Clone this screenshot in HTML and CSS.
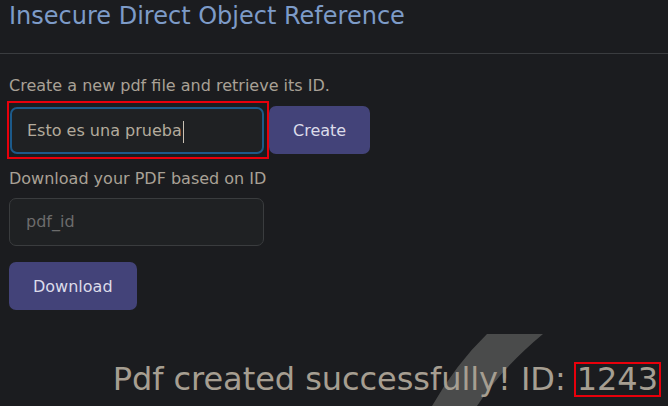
FILE: index.html
```html
<!DOCTYPE html>
<html>
<head>
<meta charset="utf-8">
<link rel="stylesheet" href="styles.css">
</head>
<body>
<div class="page">
  <header class="header">
    <h1 class="title">Insecure Direct Object Reference</h1>
  </header>
  <main class="content">
    <p class="label">Create a new pdf file and retrieve its ID.</p>
    <div class="row">
      <div class="highlight">
        <div class="input focused">Esto es una prueba<span class="caret"></span></div>
      </div>
      <button class="btn">Create</button>
    </div>
    <p class="label second">Download your PDF based on ID</p>
    <div class="input placeholder">pdf_id</div>
    <button class="btn download">Download</button>
    <div class="result">
      <svg class="swoosh" width="668" height="80" viewBox="0 326 668 80">
        <path d="M487 334 L543 334 Q502 368 477 406 L432 406 Q456 364 487 334 Z" fill="#4a4b4b"/>
      </svg>
      <p class="message">Pdf created successfully! ID: <span class="id">1243</span></p>
    </div>
  </main>
</div>
</body>
</html>
```
FILE: styles.css
```css
* { box-sizing: border-box; }
html, body { margin: 0; padding: 0; }
body {
  background: #1b1c1f;
  font-family: "DejaVu Sans", sans-serif;
  width: 668px;
  height: 406px;
  overflow: hidden;
}
.page { position: relative; height: 406px; }
.header {
  height: 54px;
  border-bottom: 1px solid #3a3c3f;
  padding-left: 9px;
}
.title {
  margin: 0;
  font-weight: normal;
  font-size: 24px;
  line-height: 32px;
  color: #7d9bc8;
}
.content { padding-left: 9px; }
.label {
  margin: 20px 0 0;
  font-size: 16px;
  line-height: 24px;
  color: #a9a196;
}
.label.second { margin-top: 10px; }
.row { display: flex; align-items: center; margin-top: 5px; gap: 2px; }
.highlight {
  outline: 2px solid #e8000b;
  outline-offset: 0;
  padding: 4px 3px 3px 1px;
}
.input {
  width: 255px;
  height: 48px;
  border: 1px solid #3a3c3e;
  border-radius: 7px;
  background: #1f2123;
  font-size: 16px;
  line-height: 46px;
  padding-left: 16px;
  color: #b3ab9c;
}
.input.focused {
  width: 254px;
  height: 47px;
  border: 2px solid #1c5a8a;
  line-height: 43px;
  padding-left: 15px;
}
.caret {
  display: inline-block;
  width: 1px;
  height: 22px;
  background: #c9c1b4;
  vertical-align: middle;
  margin-left: 1px;
}
.input.placeholder { color: #6c6c6c; margin-top: 7px; }
.btn {
  display: block;
  height: 48px;
  padding: 0 24px;
  border: none;
  border-radius: 7px;
  background: #434379;
  color: #dcdcea;
  font-family: "DejaVu Sans", sans-serif;
  font-size: 16px;
}
.download { margin-top: 16px; }
.result {
  position: absolute;
  left: 0; right: 0; bottom: 0;
  height: 80px;
}
.swoosh { position: absolute; left: 0; top: 0; }
.message {
  position: relative;
  margin: 0;
  text-align: right;
  padding-right: 9px;
  font-size: 32px;
  line-height: 40px;
  margin-top: 33px;
  letter-spacing: -0.05px;
  color: #a69e91;
}
.id {
  display: inline-block;
  line-height: 31px;
  height: 31px;
  padding: 0 1px;
  outline: 2px solid #e8000b;
  outline-offset: 0;
}
```
